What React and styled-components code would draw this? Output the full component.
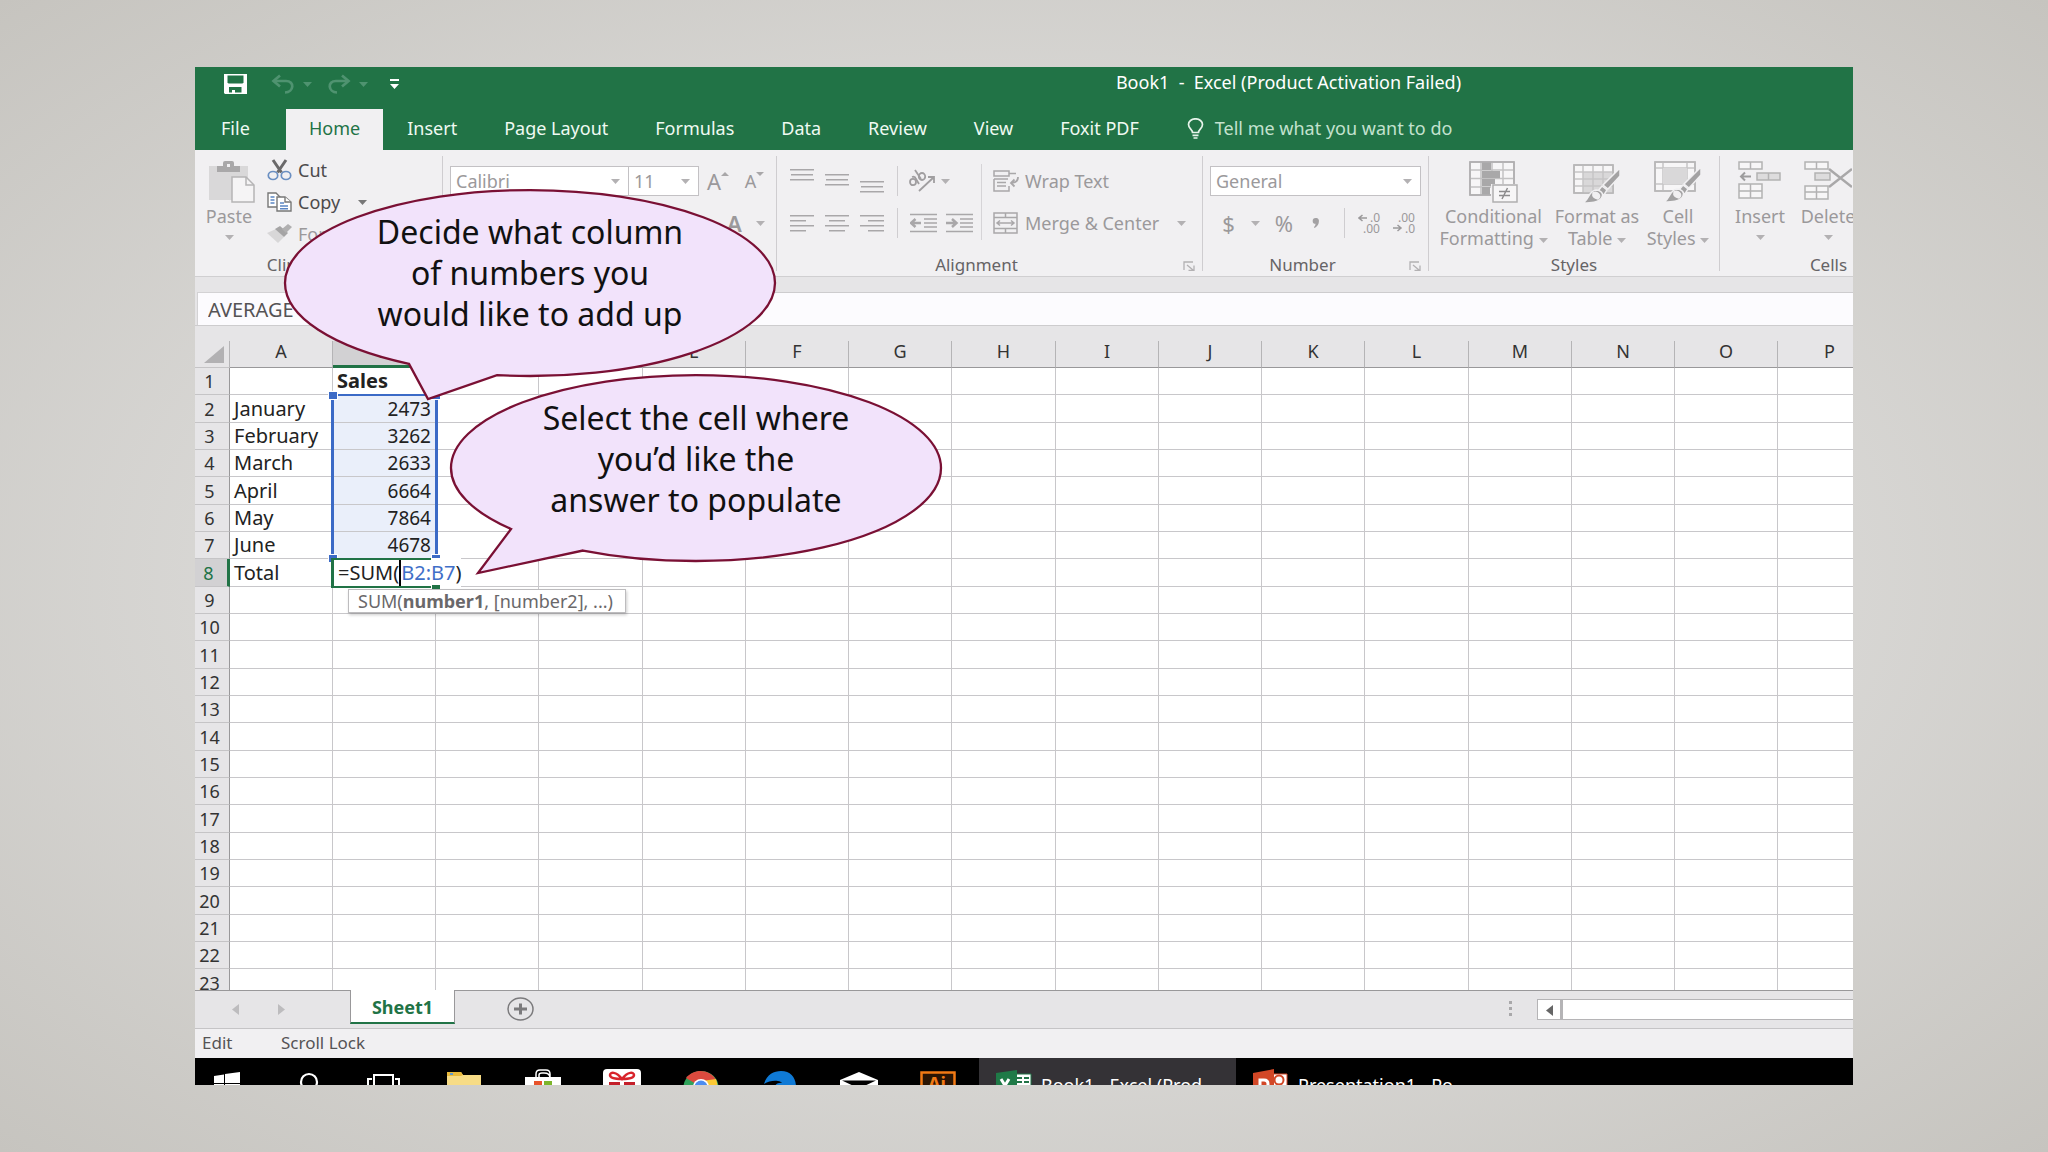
import React, { useState } from "react";
import styled, { createGlobalStyle } from "styled-components";

const COLUMNS = ["A", "B", "C", "D", "E", "F", "G", "H", "I", "J", "K", "L", "M", "N", "O", "P"];
const ROWS = Array.from({ length: 23 }, (_, i) => i + 1);

const LABELS = {
    2: "January",
    3: "February",
    4: "March",
    5: "April",
    6: "May",
    7: "June",
    8: "Total",
};

const SALES = { 2: 2473, 3: 3262, 4: 2633, 5: 6664, 6: 7864, 7: 4678 };

const TABS = ["Home", "Insert", "Page Layout", "Formulas", "Data", "Review", "View", "Foxit PDF"];

const Caret = ({ color = "#b3b1b3" }) => (
    <svg width="9" height="5" viewBox="0 0 9 5">
        <path d="M0 0h9L4.500 5z" fill={color} />
    </svg>
);

const Lines = ({ rows, top }) => (
    <svg width="24" height="30" viewBox="0 0 24 30">
        {rows.map(([x, w], i) => (
            <rect key={i} x={x} y={top + i * 5} width={w} height="1.500" fill="#a9a7a9" />
        ))}
    </svg>
);

const SaveIcon = () => (
    <svg width="23" height="20" viewBox="0 0 23 20">
        <path d="M0 0h23v20H1l-1-1z" fill="#fff" />
        <path d="M3.500 1.500h16v7l-1 1h-14l-1-1z" fill="#217346" />
        <path d="M5 13h12.500v5.500H11V16H8v2.500H5z" fill="#217346" />
    </svg>
);

const UndoIcon = ({ flip }) => (
    <svg width="24" height="20" viewBox="0 0 24 20">
        <g transform={flip ? "translate(24 0) scale(-1 1)" : undefined} fill="none" stroke="#4f9370" strokeWidth="2.700">
            <path d="M9 1.500L2.500 7L9 12.500" />
            <path d="M3 7h12c9 0 8 11-1 11.500" />
        </g>
    </svg>
);

const BulbIcon = () => (
    <svg width="17" height="21" viewBox="0 0 17 21" fill="none" stroke="#e6f3ea" strokeWidth="1.700">
        <path d="M5.500 14.500c0-3-4-4-4-8a7 5.700 0 0 1 14 0c0 4-4 5-4 8z" />
        <path d="M5.500 17.300h6M6.500 20h4" />
    </svg>
);

const PasteIcon = () => (
    <svg width="52" height="42" viewBox="-6 0 52 42">
        <path d="M0 5h39v34H0z" fill="#d9d8d9" />
        <path d="M8 5h6V2q0-2 2-2h7q2 0 2 2v3h6v6H8z" fill="#a9a8a9" />
        <path d="M18 3h3v3h-3z" fill="#f1f0f2" />
        <path d="M23 16h14l8 8v17H23z" fill="#f5f4f5" stroke="#b5b4b5" strokeWidth="1.500" />
        <path d="M37 16v8h8" fill="none" stroke="#b5b4b5" strokeWidth="1.500" />
    </svg>
);

const CutIcon = () => (
    <svg width="25" height="22" viewBox="0 0 25 22" fill="none">
        <path d="M6 1l8.500 12.500M19 1l-8.500 12.500" stroke="#6a696a" strokeWidth="3" />
        <ellipse cx="6" cy="16.500" rx="4.700" ry="4" stroke="#6a8fc2" strokeWidth="1.700" />
        <ellipse cx="19" cy="16.500" rx="4.700" ry="4" stroke="#6a8fc2" strokeWidth="1.700" />
    </svg>
);

const CopyIcon = () => (
    <svg width="25" height="20" viewBox="0 0 25 20" fill="#fff" stroke="#777" strokeWidth="1.400">
        <path d="M1 1h8l4 4v10H1z" />
        <path d="M10 5h8l6 5v9H10z" />
        <path d="M18 5v5h6" />
        <path d="M3.500 5h4M3.500 8h4M3.500 11h4M13 11h4M13 14h8M13 16.700h8" stroke="#5b86c4" />
    </svg>
);

const PainterIcon = () => (
    <svg width="25" height="20" viewBox="0 0 25 20">
        <path d="M0 9l9-4 8 8-6 6z" fill="#d8d7d8" />
        <path d="M8 5l5-3 8 7-4 4z" fill="#a5a4a5" />
        <path d="M15 5l6-5 4 3-6 6z" fill="#b0afb0" />
    </svg>
);

const OrientationIcon = () => (
    <svg width="28" height="24" viewBox="0 0 28 24" fill="none" stroke="#a09ea0" strokeWidth="1.800">
        <ellipse cx="5" cy="13" rx="3" ry="3.200" />
        <path d="M4 8q3-1 4 2l3 5" />
        <ellipse cx="14" cy="7.500" rx="3.200" ry="3.500" />
        <path d="M7 1l6 9" />
        <path d="M11 22L26 8M20 8h6v6" />
    </svg>
);

const IndentIcon = ({ right }) => (
    <svg width="27" height="20" viewBox="0 0 27 20" stroke="#a9a7a9" strokeWidth="1.500" fill="none">
        <path d="M0 1.500h27M14 6h13M14 10h13M14 14h13M0 18.500h27" />
        <path d={right ? "M0 10h10M6 6l4.500 4L6 14" : "M11 10H1.500M5.500 6L1 10l4.500 4"} strokeWidth="2.500" />
    </svg>
);

const WrapIcon = () => (
    <svg width="26" height="22" viewBox="0 0 26 22" stroke="#a9a7a9" strokeWidth="1.500" fill="none">
        <path d="M1 1h15v5H1zM16 3.500h7M1 9h14M1 9v12h15v-5M4 12.500h9M4 16h9" />
        <path d="M25 7c0 4-2 6-7 6M21.500 9.500L18 13l3.500 3.500" strokeWidth="1.800" />
    </svg>
);

const MergeIcon = () => (
    <svg width="26" height="22" viewBox="0 0 26 22" stroke="#a9a7a9" strokeWidth="1.500" fill="none">
        <path d="M1 1h23v20H1zM1 5.500h23M1 16.500h23M12.500 1v4.500M12.500 16.500V21" />
        <path d="M4 11h17M7 8.500L4 11l3 2.500M18 8.500L21 11l-3 2.500" />
    </svg>
);

const LauncherIcon = () => (
    <svg width="12" height="10" viewBox="0 0 12 10" stroke="#b3b1b3" fill="none" strokeWidth="1.300">
        <path d="M1 9V1h9M4 4l6 5M11 4.500V9.300H5.500" />
    </svg>
);

const DecimalIcon = ({ up }) => (
    <svg width="24" height="28" viewBox="0 -3 24 28" fill="#9b999b" fontFamily="Noto Sans, sans-serif" fontSize="12">
        <path d={up ? "M9 6H1M4.500 3L1 6l3.500 3" : "M0 16h8M4.500 13L8 16l-3.500 3"} stroke="#9b999b" strokeWidth="1.500" fill="none" />
        <text x={up ? 12 : 5} y="10">{up ? ".0" : ".00"}</text>
        <text x={up ? 5 : 12} y="21">{up ? ".00" : ".0"}</text>
    </svg>
);

const Brush = ({ x, y }) => (
    <g transform={`translate(${x} ${y})`} stroke="#f1f0f2">
        <path d="M36 0v8L24 21l-5-4z" fill="#a3a2a3" />
        <path d="M18 18l5 4-3 5-6-4z" fill="#a3a2a3" />
        <path d="M12 22c4 0 8 3 6 7-3 6-12 6-19 6 7-4 5-12 13-13z" fill="#a3a2a3" />
        <path d="M9 25c4-2 9 2 5 6-3-1-6-2-5-6z" fill="#f1f0f2" />
    </g>
);

const ConditionalIcon = () => (
    <svg width="49" height="42" viewBox="0 0 49 42" stroke="#b0afb0" strokeWidth="1.500" fill="none">
        <path d="M1 1h44v33H1z" fill="#f7f6f7" />
        <path d="M12 1v33M23 1v33M34 1v33M1 9h44M1 17.500h44M1 26h44" stroke="#c3c2c3" />
        <path d="M13 1h9v8h-9zM13 10h18v7H13zM13 18h13v7H13zM13 26h8v8h-8z" fill="#a9a8a9" stroke="none" />
        <path d="M1 1h44v33H1z" />
        <path d="M22 23h27v19H22z" fill="#f1f0f2" stroke="none" />
        <path d="M24 24h24v17H24z" fill="#f7f6f7" />
        <path d="M30 30.500h11M30 34.500h11M38.500 27l-5.500 11" stroke="#8d8c8d" />
    </svg>
);

const TableIcon = () => (
    <svg width="48" height="42" viewBox="0 0 48 42" stroke="#b8b7b8" strokeWidth="1.500" fill="none">
        <path d="M1 4h39v28H1z" fill="#f7f6f7" />
        <path d="M10 11h30v21H10z" fill="#d9d8d9" stroke="none" />
        <path d="M10 4v28M20 4v28M30 4v28M1 11h39M1 18h39M1 25h39" stroke="#c6c5c6" />
        <path d="M1 4h39v28H1z" />
        <Brush x={11} y={7} />
    </svg>
);

const CellStylesIcon = () => (
    <svg width="48" height="42" viewBox="0 0 48 42" stroke="#b8b7b8" strokeWidth="1.500" fill="none">
        <path d="M1 1h40v29H1z" fill="#f7f6f7" />
        <path d="M9 1v29M33 1v29M1 7h40M1 23h40" stroke="#c6c5c6" />
        <path d="M9 7h24v16H9z" fill="#d9d8d9" stroke="none" />
        <path d="M1 1h40v29H1z" />
        <Brush x={11} y={6} />
    </svg>
);

const InsertIcon = () => (
    <svg width="44" height="42" viewBox="0 0 44 42" stroke="#b3b2b3" strokeWidth="1.500" fill="#f7f6f7">
        <path d="M1 1h23v7H1zM12.500 1v7M1 23h23v14H1zM12.500 23v14M1 30h23" />
        <path d="M19 12h23v7H19zM30.500 12v7" fill="#dddcdd" />
        <path d="M13 15.500H3.500M7 11.500L3 15.500l4 4" fill="none" stroke="#9d9c9d" strokeWidth="2" />
    </svg>
);

const DeleteIcon = () => (
    <svg width="48" height="42" viewBox="0 0 48 42" stroke="#b3b2b3" strokeWidth="1.500" fill="#f7f6f7">
        <path d="M1 1h23v7H1zM12.500 1v7M1 25h23v13H1zM12.500 25v13M1 31h23" />
        <path d="M11 12h15v7H11z" fill="#dddcdd" />
        <path d="M25 8l23 18M48 8L25 26" fill="none" stroke="#a9a8a9" strokeWidth="2.500" />
    </svg>
);

const TaskIcons = [
    ["Start", 17, 30, (
        <svg key="s" width="30" height="28" viewBox="0 0 30 28" fill="#fff">
            <path d="M2 7l10-1.500V14H2zM13 5l15-2v11H13zM2 15h10v8H2zM13 15h15v10H13z" />
        </svg>
    )],
    ["Search", 56, 22, (
        <svg key="q" width="22" height="28" viewBox="0 0 22 28" fill="none" stroke="#fff" strokeWidth="2.200">
            <ellipse cx="11" cy="13" rx="8" ry="8" />
            <path d="M6 19l-5 6" />
        </svg>
    )],
    ["Task View", 46, 34, (
        <svg key="t" width="34" height="28" viewBox="0 0 34 28" fill="none" stroke="#fff" strokeWidth="2">
            <path d="M8 6h19v17H8zM6 10H2v12M29 10h4v12" />
        </svg>
    )],
    ["File Explorer", 46, 36, (
        <svg key="f" width="36" height="28" viewBox="0 0 36 28">
            <path d="M1 3h14l2 3h18v20H1z" fill="#f7dc86" />
            <path d="M1 3h14l2 3-2 1H1z" fill="#e8b93c" />
            <path d="M4 4h3v2H4z" fill="#5d9ad0" />
        </svg>
    )],
    ["Store", 42, 38, (
        <svg key="b" width="38" height="28" viewBox="0 0 38 28">
            <path d="M12 9V5q0-4 4-4h6q4 0 4 4v4M15 9V6q0-2 3-2h2q6 0 6 5" fill="none" stroke="#fff" strokeWidth="1.500" />
            <path d="M1 8h36v20H1z" fill="#fff" />
            <path d="M10 12h8v7h-8z" fill="#e8532b" />
            <path d="M20 12h8v7h-8z" fill="#7db52b" />
        </svg>
    )],
    ["Gift", 40, 40, (
        <svg key="g" width="40" height="28" viewBox="0 0 40 28">
            <rect x="1" y="0" width="38" height="34" rx="4" fill="#fff" />
            <path d="M20 10C14 2 8 3 8 6s4 4 12 4c8 0 12-1 12-4s-6-4-12 4z" fill="none" stroke="#d8242b" strokeWidth="2.500" />
            <path d="M7 13h11v3H7zM22 13h11v3H22z" fill="#c4202a" />
        </svg>
    )],
    ["Chrome", 41, 36, (
        <svg key="c" width="36" height="28" viewBox="0 0 36 28">
            <ellipse cx="18" cy="18" rx="17.500" ry="16" fill="#2fa35a" />
            <path d="M3 9C11-1 27 0 33 11l-15 7z" fill="#db4a3e" />
            <path d="M33 10l-14 2v20c15 0 18-12 14-22z" fill="#fbc935" />
            <ellipse cx="18" cy="18" rx="8" ry="8" fill="#fff" />
            <ellipse cx="18" cy="18" rx="6.500" ry="6.500" fill="#4d8df0" />
        </svg>
    )],
    ["Edge", 45, 32, (
        <svg key="e" width="32" height="28" viewBox="0 0 32 28">
            <path d="M0 15C3 5 10 2 17 2c10 0 15 7 15 16H11c0-5 10-6 10-1h-1c-1-6-12-7-20-2z" fill="#0f7ad6" />
        </svg>
    )],
    ["Mail", 43, 40, (
        <svg key="m" width="40" height="28" viewBox="0 0 40 28">
            <path d="M1 11l19-8 19 8v16H1z" fill="#fff" />
            <path d="M3 11.500l34 0-17 8z" fill="#000" />
        </svg>
    )],
    ["Illustrator", 41, 36, (
        <svg key="a" width="36" height="28" viewBox="0 0 36 28">
            <path d="M1.500 3.500h33v30h-33z" fill="#2a1504" stroke="#f27a14" strokeWidth="2.500" />
            <text x="8" y="21" fill="#f27a14" fontFamily="Noto Sans, sans-serif" fontWeight="bold" fontSize="18">Ai</text>
        </svg>
    )],
];

const ExcelIcon = () => (
    <svg width="38" height="28" viewBox="0 0 38 28">
        <path d="M20 5h16v22H20z" fill="#fff" stroke="#217346" />
        <path d="M22 8h5v2h-5zM29 8h5v2h-5zM22 12h5v2h-5zM29 12h5v2h-5z" fill="#217346" />
        <path d="M1 4l21-3v27H1z" fill="#1f7a47" />
        <path d="M6 10l8 13M14 10L6 23" stroke="#fff" strokeWidth="3" />
    </svg>
);

const PowerPointIcon = () => (
    <svg width="38" height="28" viewBox="0 0 38 28">
        <path d="M20 5h15v22H20z" fill="#fff" stroke="#d24726" />
        <circle cx="27" cy="11" r="4.500" fill="none" stroke="#d24726" strokeWidth="2" />
        <path d="M1 4l21-4v28H1z" fill="#d24726" />
        <path d="M8 24V11h4q4 0 4 4t-4 4H8" fill="none" stroke="#fff" strokeWidth="3" />
    </svg>
);

const Callout = ({ x, y, path, children }) => (
    <Bubble $x={x} $y={y}>
        <BubbleShape viewBox="0 0 492 212" width="492" height="212">
            <path d={path} fill="#f2e3fb" stroke="#7a1034" strokeWidth="2.300" />
        </BubbleShape>
        <BubbleText>{children}</BubbleText>
    </Bubble>
);

const App = () => {
    const [activeTab, setActiveTab] = useState("Home");
    const [nameBox, setNameBox] = useState("AVERAGE");

    return (
        <Slide>
            <GlobalStyle />
            <Window>
                <TitleBar>
                    <QuickAccess>
                        <QuickButton $w={47} aria-label="Save"><SaveIcon /></QuickButton>
                        <QuickButton $w={56} aria-label="Undo"><UndoIcon /><Caret color="#4f9370" /></QuickButton>
                        <QuickButton $w={63} aria-label="Redo"><UndoIcon flip /><Caret color="#4f9370" /></QuickButton>
                        <QuickButton $w={9} aria-label="Customize Quick Access Toolbar">
                            <svg width="9" height="10" viewBox="0 0 9 10" fill="#fff">
                                <path d="M0 0h9v2H0zM0 5h9L4.500 10z" />
                            </svg>
                        </QuickButton>
                    </QuickAccess>
                    <Title>Book1&nbsp; -&nbsp; Excel (Product Activation Failed)</Title>
                </TitleBar>

                <TabBar>
                    <FileTab>File</FileTab>
                    {TABS.map((tab) => (
                        <Tab key={tab} $active={tab === activeTab} onClick={() => setActiveTab(tab)}>
                            {tab}
                        </Tab>
                    ))}
                    <TellMe><BulbIcon />Tell me what you want to do</TellMe>
                </TabBar>

                <Ribbon>
                    <Group $w={248}>
                        <GroupBody>
                            <BigButton $w={68}><PasteIcon />Paste<Caret /></BigButton>
                            <ClipStack>
                                <SmallButton $short $enabled><CutIcon />Cut</SmallButton>
                                <SmallButton $short $enabled><CopyIcon />Copy<CaretSlot><Caret color="#777" /></CaretSlot></SmallButton>
                                <SmallButton $short><PainterIcon />Format Painter</SmallButton>
                            </ClipStack>
                        </GroupBody>
                        <GroupLabel><span>Clipboard</span><Launcher aria-label="Clipboard options"><LauncherIcon /></Launcher></GroupLabel>
                    </Group>

                    <Group $w={334}>
                        <GroupBody>
                            <Stack $pad={7}>
                                <ToolRow>
                                    <SelectBox $w={179}>
                                        <Select aria-label="Font"><option>Calibri</option></Select>
                                        <Caret />
                                    </SelectBox>
                                    <SelectBox $w={70} $joined>
                                        <Select aria-label="Font size"><option>11</option></Select>
                                        <Caret />
                                    </SelectBox>
                                    <Tool $w={38} aria-label="Increase font size">
                                        <FontGlyph $size={22}>A</FontGlyph>
                                        <Raised><svg width="8" height="4" viewBox="0 0 8 4"><path d="M0 4l4-4 4 4z" fill="#a9a7a9" /></svg></Raised>
                                    </Tool>
                                    <Tool $w={35} aria-label="Decrease font size">
                                        <FontGlyph $size={18}>A</FontGlyph>
                                        <Raised><svg width="8" height="4" viewBox="0 0 8 4"><path d="M0 0h8L4 4z" fill="#a9a7a9" /></svg></Raised>
                                    </Tool>
                                </ToolRow>
                                <ToolRow $end>
                                    <Tool $w={52} $gap={14} aria-label="Font color">
                                        <FontGlyph $size={22} $bold>A</FontGlyph>
                                        <Caret />
                                    </Tool>
                                </ToolRow>
                            </Stack>
                        </GroupBody>
                        <GroupLabel><span>Font</span><Launcher aria-label="Font options"><LauncherIcon /></Launcher></GroupLabel>
                    </Group>

                    <Group $w={426}>
                        <GroupBody>
                            <Stack $pad={7}>
                                <ToolRow>
                                    <Tool $w={35} aria-label="Top align"><Lines top={3} rows={[[0, 24], [1, 22], [0, 24]]} /></Tool>
                                    <Tool $w={35} aria-label="Middle align"><Lines top={8} rows={[[0, 24], [1, 22], [0, 24]]} /></Tool>
                                    <Tool $w={35} aria-label="Bottom align"><Lines top={15} rows={[[0, 24], [1, 22], [0, 24]]} /></Tool>
                                    <Rule />
                                    <Tool $w={48} $gap={5} aria-label="Orientation"><OrientationIcon /><Caret /></Tool>
                                </ToolRow>
                                <ToolRow>
                                    <Tool $w={35} aria-label="Align left"><Lines top={7} rows={[[0, 24], [0, 16], [0, 24], [0, 16]]} /></Tool>
                                    <Tool $w={35} aria-label="Center"><Lines top={7} rows={[[0, 24], [4, 16], [0, 24], [4, 16]]} /></Tool>
                                    <Tool $w={35} aria-label="Align right"><Lines top={7} rows={[[0, 24], [8, 16], [0, 24], [8, 16]]} /></Tool>
                                    <Rule />
                                    <Tool $w={36} aria-label="Decrease indent"><IndentIcon /></Tool>
                                    <Tool $w={36} aria-label="Increase indent"><IndentIcon right /></Tool>
                                </ToolRow>
                            </Stack>
                            <TallRule />
                            <Stack $pad={7}>
                                <SmallButton><WrapIcon />Wrap Text</SmallButton>
                                <SmallButton><MergeIcon />Merge &amp; Center<CaretSlot><Caret /></CaretSlot></SmallButton>
                            </Stack>
                        </GroupBody>
                        <GroupLabel><span>Alignment</span><Launcher aria-label="Alignment options"><LauncherIcon /></Launcher></GroupLabel>
                    </Group>

                    <Group $w={226}>
                        <GroupBody>
                            <Stack $pad={7}>
                                <ToolRow>
                                    <SelectBox $w={211}>
                                        <Select aria-label="Number format"><option>General</option></Select>
                                        <Caret />
                                    </SelectBox>
                                </ToolRow>
                                <ToolRow>
                                    <Tool $w={62} $gap={16} aria-label="Accounting format"><FontGlyph $size={22}>$</FontGlyph><Caret /></Tool>
                                    <Tool $w={24} aria-label="Percent style"><FontGlyph $size={22}>%</FontGlyph></Tool>
                                    <Tool $w={40} aria-label="Comma style">
                                        <svg width="8" height="10" viewBox="0 0 9 12"><path d="M4 0a3.500 3.500 0 0 1 4 4q0 5-5 8l-1-1q2-2 2-4a3.500 3.500 0 1 1 0-7z" fill="#a3a1a3" /></svg>
                                    </Tool>
                                    <Rule />
                                    <Tool $w={35} aria-label="Increase decimal"><DecimalIcon up /></Tool>
                                    <Tool $w={35} aria-label="Decrease decimal"><DecimalIcon /></Tool>
                                </ToolRow>
                            </Stack>
                        </GroupBody>
                        <GroupLabel><span>Number</span><Launcher aria-label="Number options"><LauncherIcon /></Launcher></GroupLabel>
                    </Group>

                    <Group $w={291}>
                        <GroupBody $pad={8}>
                            <BigButton $w={113}><ConditionalIcon />Conditional<span>Formatting <Caret /></span></BigButton>
                            <BigButton $w={94}><TableIcon />Format as<span>Table <Caret /></span></BigButton>
                            <BigButton $w={68}><CellStylesIcon />Cell<span>Styles <Caret /></span></BigButton>
                        </GroupBody>
                        <GroupLabel><span>Styles</span></GroupLabel>
                    </Group>

                    <Group $w={218}>
                        <GroupBody $pad={6}>
                            <BigButton $w={68}><InsertIcon />Insert<Caret /></BigButton>
                            <BigButton $w={68}><DeleteIcon />Delete<Caret /></BigButton>
                        </GroupBody>
                        <GroupLabel><span>Cells</span></GroupLabel>
                    </Group>
                </Ribbon>

                <FormulaBar>
                    <NameBox aria-label="Name box" value={nameBox} onChange={(e) => setNameBox(e.target.value)} />
                    <FormulaInput aria-label="Formula bar" />
                </FormulaBar>

                <Sheet>
                    <Grid>
                        <colgroup>
                            <Col $w={35} />
                            {COLUMNS.map((c, i) => <Col key={c} $w={i % 4 === 3 ? 104 : 103} />)}
                        </colgroup>
                        <thead>
                            <tr>
                                <Corner>
                                    <svg width="20" height="17" viewBox="0 0 20 17"><path d="M20 0v17H0z" fill="#b2b1b3" /></svg>
                                </Corner>
                                {COLUMNS.map((c) => <ColHead key={c} $active={c === "B"}>{c}</ColHead>)}
                            </tr>
                        </thead>
                        <tbody>
                            {ROWS.map((row) => (
                                <Row key={row}>
                                    <RowHead $active={row === 8}>{row}</RowHead>
                                    {COLUMNS.map((c) => {
                                        if (c === "A") return <Cell key={c}>{LABELS[row]}</Cell>;
                                        if (c === "B" && row === 1) return <Cell key={c} $bold>Sales</Cell>;
                                        if (c === "B" && row === 8) {
                                            return (
                                                <Cell key={c}>
                                                    <Editor>=SUM(<TextCursor /><Ref>B2:B7</Ref>)</Editor>
                                                    <FillHandle />
                                                    <Hint>SUM(<b>number1</b>, [number2], ...)</Hint>
                                                </Cell>
                                            );
                                        }
                                        if (c === "B" && SALES[row]) return <Cell key={c} $number>{SALES[row]}</Cell>;
                                        return <Cell key={c} />;
                                    })}
                                </Row>
                            ))}
                        </tbody>
                    </Grid>
                    <RangeOutline>
                        <Handle $left $top /><Handle $top /><Handle $left /><Handle />
                    </RangeOutline>
                </Sheet>

                <SheetBar>
                    <NavArrow aria-label="Previous sheet"><svg width="7" height="11" viewBox="0 0 7 11"><path d="M7 0v11L0 5.500z" fill="#bdbcbe" /></svg></NavArrow>
                    <NavArrow aria-label="Next sheet"><svg width="7" height="11" viewBox="0 0 7 11"><path d="M0 0v11l7-5.500z" fill="#bdbcbe" /></svg></NavArrow>
                    <SheetTab>Sheet1</SheetTab>
                    <AddSheet aria-label="New sheet">
                        <svg width="27" height="24" viewBox="0 0 27 24" fill="none" stroke="#7b7a7c">
                            <ellipse cx="13.500" cy="12" rx="12.500" ry="11" strokeWidth="1.500" />
                            <path d="M7 12h13M13.500 6.500v11" strokeWidth="3" />
                        </svg>
                    </AddSheet>
                    <Splitter width="4" height="16" viewBox="0 0 4 16" fill="#a9a8aa">
                        <path d="M0 0h3v3H0zM0 6h3v3H0zM0 12h3v3H0z" />
                    </Splitter>
                    <ScrollBar>
                        <ScrollArrow aria-label="Scroll left"><svg width="7" height="11" viewBox="0 0 7 11"><path d="M7 0v11L0 5.500z" fill="#666" /></svg></ScrollArrow>
                    </ScrollBar>
                </SheetBar>

                <StatusBar>
                    <Mode>Edit</Mode>
                    <span>Scroll Lock</span>
                </StatusBar>

                <TaskBar>
                    {TaskIcons.map(([name, gap, width, icon]) => (
                        <TaskButton key={name} aria-label={name} $gap={gap} $w={width}>{icon}</TaskButton>
                    ))}
                    <TaskWindow $active><ExcelIcon /><TaskLabel>Book1 - Excel (Prod...</TaskLabel></TaskWindow>
                    <TaskWindow><PowerPointIcon /><TaskLabel>Presentation1 - Po...</TaskLabel></TaskWindow>
                </TaskBar>

                <Callout x={89} y={122} path="M125 174.870L144 210L213 186.150A245 93 0 0 0 491 94A245 93 0 0 0 1 94A245 93 0 0 0 125 174.870Z">
                    Decide what column<br />of numbers you<br />would like to add up
                </Callout>
                <Callout x={255} y={308} path="M61 153.970L28 198L133 175.520A245 93 0 0 0 491 93A245 93 0 0 0 1 93A245 93 0 0 0 61 153.970Z">
                    Select the cell where<br />you’d like the<br />answer to populate
                </Callout>
            </Window>
        </Slide>
    );
};

export default App;

const GlobalStyle = createGlobalStyle`
    * {
        box-sizing: border-box;
    }

    body {
        margin: 0;
        font-family: "Noto Sans", "Open Sans", sans-serif;
        font-size: 18px;
    }

    button, input, select {
        margin: 0;
        padding: 0;
        border: none;
        border-radius: 0;
        background: none;
        font: inherit;
        color: inherit;
    }

    svg {
        flex: none;
    }
`;

const Slide = styled.main`
    display: flex;
    height: 100vh;
    min-height: 700px;
    padding: 67px 195px;
    background: radial-gradient(ellipse at 50% 50%, #e6e5e3 0%, #dcdbd9 45%, #c6c4bf 100%);
`;

const Window = styled.div`
    position: relative;
    display: flex;
    flex: 1;
    flex-direction: column;
    min-width: 0;
    overflow: hidden;
    background: #e6e5e7;
`;

const TitleBar = styled.header`
    display: flex;
    flex: none;
    height: 42px;
    background: #217346;
    color: #fff;
`;

const QuickAccess = styled.div`
    display: flex;
    flex: none;
    align-items: center;
    width: 205px;
    padding-left: 29px;
    padding-bottom: 8px;
`;

const QuickButton = styled.button`
    display: flex;
    flex: none;
    align-items: center;
    gap: 8px;
    width: ${({ $w }) => $w}px;
`;

const Title = styled.div`
    flex: 1;
    padding-left: 324px;
    line-height: 30px;
    text-align: center;
    white-space: nowrap;
`;

const TabBar = styled.nav`
    display: flex;
    flex: none;
    gap: 1px;
    height: 41px;
    background: #217346;
    color: #effaf2;
    white-space: nowrap;
`;

const Tab = styled.button`
    display: flex;
    flex: none;
    padding: 0 23px;
    background: ${({ $active }) => ($active ? "#f1f0f2" : "none")};
    color: ${({ $active }) => ($active ? "#217346" : "inherit")};
    line-height: 38px;
`;

const FileTab = styled(Tab)`
    width: 90px;
    padding: 0 26px;
`;

const TellMe = styled.button`
    display: flex;
    align-items: center;
    gap: 11px;
    height: 38px;
    padding-left: 24px;
    color: #c3e2cf;
`;

const Ribbon = styled.div`
    display: flex;
    flex: none;
    height: 127px;
    padding: 6px 0 5px;
    overflow: hidden;
    background: #f1f0f2;
    border-bottom: 1px solid #d0cfd1;
    color: #9b999b;
`;

const Group = styled.section`
    display: flex;
    flex: none;
    flex-direction: column;
    width: ${({ $w }) => $w}px;
    border-right: 1px solid #cfcdd0;
`;

const GroupBody = styled.div`
    display: flex;
    flex: 1;
    gap: ${({ $pad }) => ($pad ? 0 : "4px")};
    padding-left: ${({ $pad }) => $pad || 0}px;
`;

const GroupLabel = styled.div`
    display: flex;
    height: 12px;
    color: #666466;
    font-size: 17px;
    line-height: 12px;

    span {
        flex: 1;
        text-align: center;
    }
`;

const Launcher = styled.button`
    width: 26px;
    padding-left: 7px;
    text-align: left;
    line-height: 12px;
`;

const BigButton = styled.button`
    display: flex;
    flex: none;
    flex-direction: column;
    align-items: center;
    width: ${({ $w }) => $w}px;
    padding-top: 5px;
    line-height: 22px;
    white-space: nowrap;

    > svg:first-child {
        margin-bottom: 2px;
    }

    > svg:last-child {
        margin-top: 8px;
    }

    span svg {
        vertical-align: middle;
    }
`;

const ClipStack = styled.div`
    display: flex;
    flex-direction: column;
    gap: 4px;
`;

const SmallButton = styled.button`
    display: flex;
    align-items: center;
    gap: 6px;
    height: ${({ $short }) => ($short ? 28 : 30)}px;
    color: ${({ $enabled }) => ($enabled ? "#4c4a4c" : "inherit")};
    white-space: nowrap;
`;

const CaretSlot = styled.span`
    display: flex;
    margin-left: 12px;
`;

const Stack = styled.div`
    display: flex;
    flex-direction: column;
    gap: 12px;
    padding-top: 10px;
    padding-left: ${({ $pad }) => $pad}px;
`;

const ToolRow = styled.div`
    display: flex;
    align-items: center;
    justify-content: ${({ $end }) => ($end ? "flex-end" : "flex-start")};
    height: 30px;
`;

const Tool = styled.button`
    display: flex;
    flex: none;
    align-items: center;
    justify-content: center;
    gap: ${({ $gap }) => $gap || 0}px;
    width: ${({ $w }) => $w}px;
    height: 30px;
`;

const FontGlyph = styled.span`
    font-size: ${({ $size }) => $size}px;
    font-weight: ${({ $bold }) => ($bold ? 600 : 400)};
    line-height: 30px;
`;

const Raised = styled.span`
    display: flex;
    align-self: flex-start;
    padding-top: 6px;
`;

const Rule = styled.span`
    flex: none;
    width: 1px;
    height: 30px;
    margin: 0 8px;
    background: #cfcdd0;

    & + button {
        margin-left: -1px;
    }
`;

const TallRule = styled.span`
    flex: none;
    width: 1px;
    height: 76px;
    margin-top: 8px;
    background: #d6d4d7;
`;

const SelectBox = styled.label`
    display: flex;
    flex: none;
    align-items: center;
    width: ${({ $w }) => $w}px;
    height: 30px;
    padding-right: 8px;
    border: 1px solid #c3c1c4;
    border-left-width: ${({ $joined }) => ($joined ? 0 : 1)}px;
    background: #fff;
`;

const Select = styled.select`
    flex: 1;
    min-width: 0;
    padding-left: 5px;
    appearance: none;
    outline: none;
`;

const FormulaBar = styled.div`
    display: flex;
    flex: none;
    gap: 8px;
    height: 49px;
    padding: 15px 0 0 2px;
    border-bottom: 1px solid #cdccce;
`;

const NameBox = styled.input`
    width: 180px;
    padding-left: 10px;
    border: 1px solid #d3d2d4;
    border-bottom: none;
    background: #fcfbfe;
    color: #555355;
    font-size: 20px;
`;

const FormulaInput = styled.input`
    flex: 1;
    min-width: 0;
    border-top: 1px solid #cdccce;
    background: #fcfbfe;
`;

const Sheet = styled.div`
    position: relative;
    flex: 1;
    min-height: 0;
    padding-top: 15px;
    overflow: hidden;
`;

const Grid = styled.table`
    width: max-content;
    table-layout: fixed;
    border-collapse: separate;
    border-spacing: 0;
    color: #222;
    font-size: 20px;
`;

const Col = styled.col`
    width: ${({ $w }) => $w}px;
`;

const HeadCell = styled.th`
    padding: 0;
    background: ${({ $active }) => ($active ? "#d2d1d3" : "#e6e5e7")};
    color: ${({ $active }) => ($active ? "#217346" : "#333")};
    font-size: 18px;
    font-weight: 400;
`;

const ColHead = styled(HeadCell)`
    height: 27px;
    border-right: 1px solid #b5b4b6;
    border-bottom: ${({ $active }) => ($active ? "3px solid #217346" : "1px solid #99989a")};
    line-height: 20px;
    vertical-align: top;
`;

const Corner = styled(HeadCell)`
    width: 35px;
    padding-right: 5px;
    border-right: 1px solid #b5b4b6;
    border-bottom: 1px solid #c5c4c6;
    text-align: right;
    line-height: 10px;
`;

const RowHead = styled(HeadCell)`
    width: 35px;
    padding-right: 5px;
    border-right: ${({ $active }) => ($active ? "3px solid #217346" : "1px solid #99989a")};
    border-bottom: 1px solid #c5c4c6;
`;

const Cell = styled.td`
    position: relative;
    padding: 0 4px;
    border-right: 1px solid #c8c7ca;
    border-bottom: 1px solid #c8c7ca;
    background: ${({ $number }) => ($number ? "#eaeffa" : "#fff")};
    font-size: ${({ $number }) => ($number ? 19 : 20)}px;
    font-weight: ${({ $bold }) => ($bold ? 700 : 400)};
    text-align: ${({ $number }) => ($number ? "right" : "left")};
    white-space: nowrap;
`;

const Row = styled.tr`
    height: 27px;
    line-height: 26px;

    &:nth-child(3n + 2) {
        height: 28px;
    }
`;

const Editor = styled.div`
    position: absolute;
    z-index: 2;
    top: -1px;
    left: -2px;
    display: flex;
    min-width: 104px;
    height: 30px;
    padding-left: 4px;
    border: solid #217346;
    border-width: 2px 0 2px 3px;
    border-image: linear-gradient(to right, #217346 100px, transparent 100px) 2 0 2 3;
    background: #fff;
    line-height: 26px;
`;

const TextCursor = styled.span`
    width: 2px;
    height: 26px;
    background: #000;
`;

const Ref = styled.span`
    color: #3f6fc8;
`;

const FillHandle = styled.span`
    position: absolute;
    z-index: 3;
    right: -5px;
    bottom: -3px;
    width: 8px;
    height: 4px;
    background: #217346;
`;

const Hint = styled.div`
    position: absolute;
    z-index: 4;
    top: 30px;
    left: 15px;
    padding: 0 12px 0 9px;
    border: 1px solid #bdbcbe;
    background: #fff;
    box-shadow: 1px 2px 3px rgba(0, 0, 0, 0.2);
    color: #6a686a;
    font-size: 18px;
    line-height: 22px;
`;

const RangeOutline = styled.div`
    position: absolute;
    z-index: 1;
    top: 68px;
    left: 136px;
    width: 107px;
    height: 166px;
    border: solid #3b6ac6;
    border-width: 2px 3px 0;
`;

const Handle = styled.span`
    position: absolute;
    top: ${({ $top }) => ($top ? "-4px" : "auto")};
    bottom: ${({ $top }) => ($top ? "auto" : "-2px")};
    left: ${({ $left }) => ($left ? "-5px" : "auto")};
    right: ${({ $left }) => ($left ? "auto" : "-5px")};
    width: 8px;
    height: 7px;
    background: #3b6ac6;
    box-shadow: 0 0 0 1px #fff;
`;

const SheetBar = styled.div`
    display: flex;
    flex: none;
    align-items: center;
    height: 39px;
    padding-bottom: 1px;
    border-top: 1px solid #99989a;
    border-bottom: 1px solid #c5c4c6;
`;

const NavArrow = styled.button`
    width: 7px;
    margin-left: 37px;
    line-height: 10px;

    & + & {
        margin-left: 39px;
    }
`;

const SheetTab = styled.button`
    align-self: flex-start;
    width: 105px;
    height: 34px;
    margin-top: -1px;
    margin-left: 65px;
    padding-top: 1px;
    border: 1px solid #99989a;
    border-top: none;
    border-bottom: 2px solid #217346;
    background: #fff;
    color: #217346;
    font-weight: 700;
`;

const AddSheet = styled.button`
    display: flex;
    margin-left: 52px;
`;

const Splitter = styled.svg`
    margin-left: auto;
`;

const ScrollBar = styled.div`
    display: flex;
    width: 316px;
    height: 21px;
    margin-left: 24px;
    border: 1px solid #b5b4b6;
    border-right: none;
    background: #fff;
`;

const ScrollArrow = styled.button`
    width: 25px;
    border-right: 3px solid #b5b4b6;
    line-height: 12px;
`;

const StatusBar = styled.footer`
    display: flex;
    flex: none;
    height: 29px;
    padding-left: 7px;
    background: #f1f0f2;
    color: #555355;
    font-size: 17px;
    line-height: 27px;
`;

const Mode = styled.span`
    width: 79px;
`;

const TaskBar = styled.div`
    display: flex;
    flex: none;
    height: 27px;
    overflow: hidden;
    background: #000;
`;

const TaskButton = styled.button`
    flex: none;
    align-self: flex-start;
    width: ${({ $w }) => $w}px;
    margin-left: ${({ $gap }) => $gap}px;
    padding-top: 11px;
`;

const TaskWindow = styled.button`
    display: flex;
    flex: none;
    gap: 8px;
    width: 257px;
    height: 46px;
    margin-left: ${({ $active }) => ($active ? 23 : 0)}px;
    padding: 11px 0 0 16px;
    background: ${({ $active }) => ($active ? "#343236" : "none")};
    color: #fff;
`;

const TaskLabel = styled.span`
    line-height: 32px;
`;

const Bubble = styled.aside`
    position: absolute;
    z-index: 5;
    top: ${({ $y }) => $y}px;
    left: ${({ $x }) => $x}px;
    width: 492px;
    padding-top: 22px;
`;

const BubbleShape = styled.svg`
    position: absolute;
    top: 0;
    left: 0;
    overflow: visible;
`;

const BubbleText = styled.p`
    position: relative;
    margin: 0;
    color: #111;
    font-size: 32px;
    line-height: 41px;
    text-align: center;
`;
